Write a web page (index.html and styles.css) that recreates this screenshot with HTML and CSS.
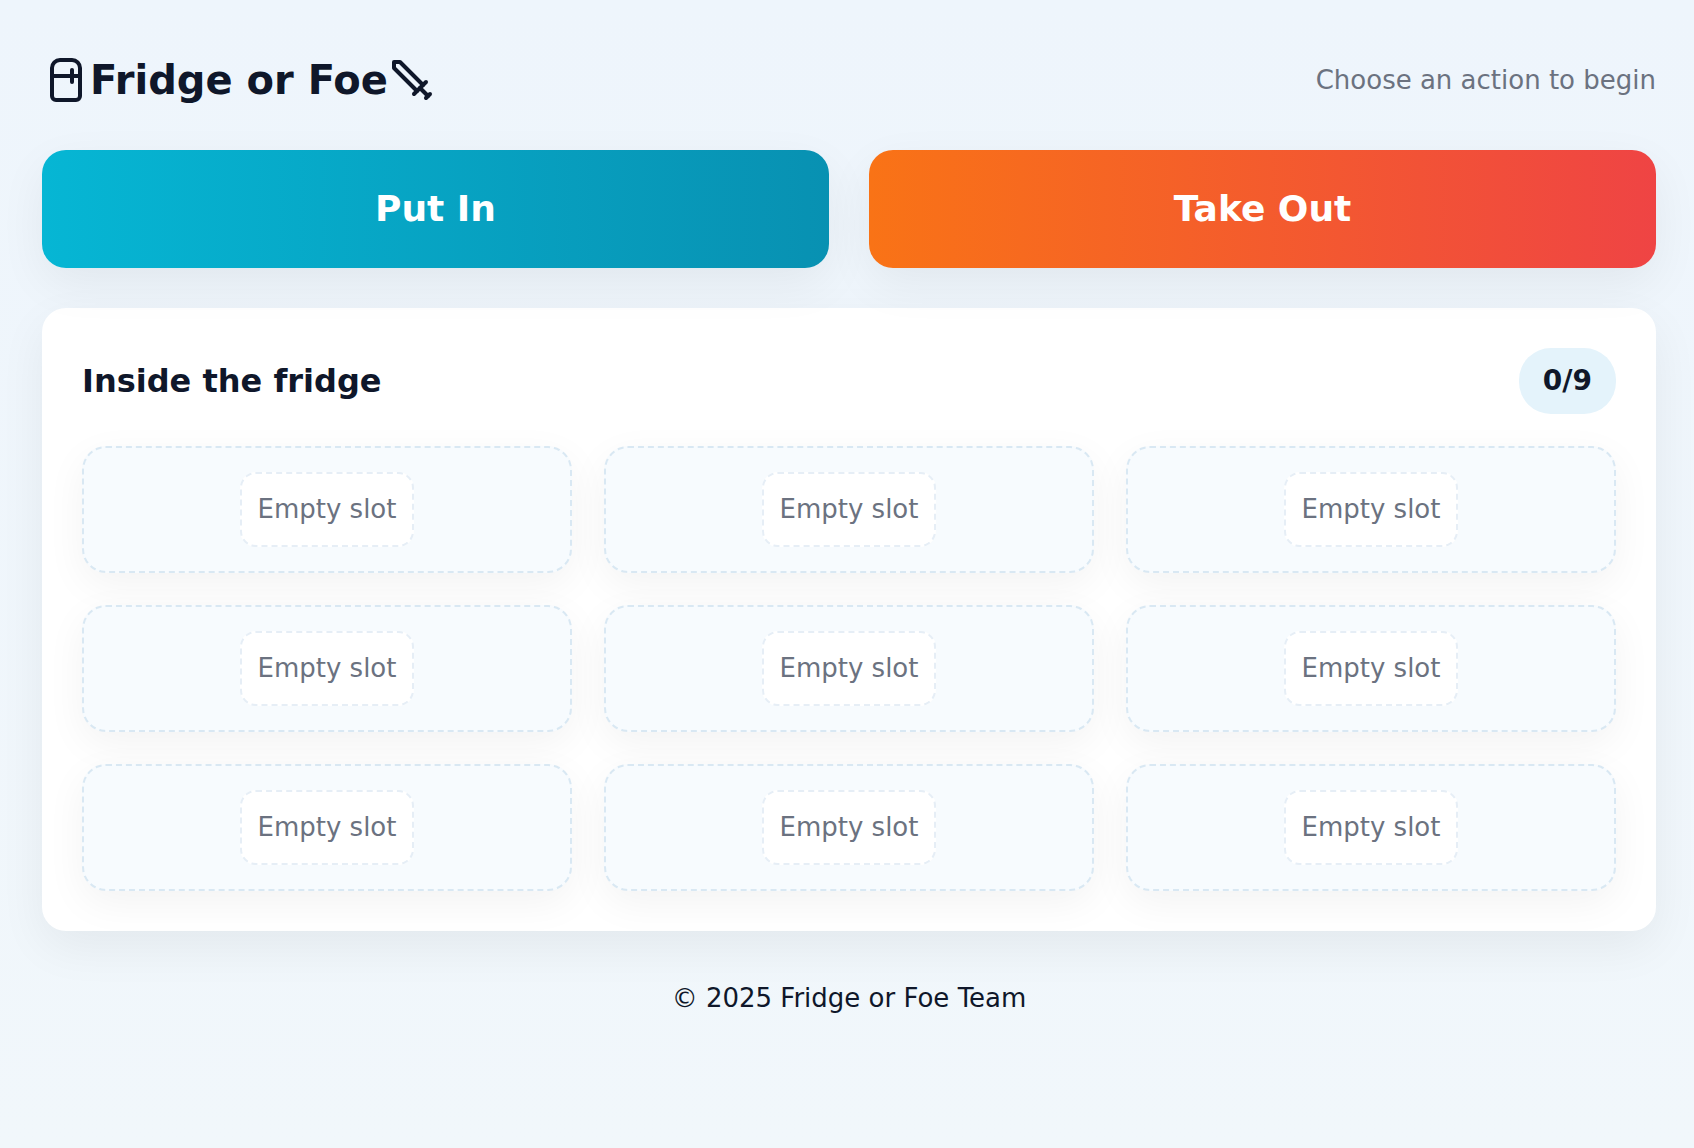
FILE: index.html
```html
<!DOCTYPE html>
<html lang="en">
<head>
<meta charset="utf-8">
<meta name="viewport" content="width=device-width, initial-scale=1">
<title>Fridge or Foe</title>
<link rel="stylesheet" href="styles.css">
</head>
<body>
<div class="app">
  <header class="header">
    <h1 class="brand">
      <svg class="icon" viewBox="0 0 24 24" aria-hidden="true"><path d="M5 6a4 4 0 0 1 4-4h6a4 4 0 0 1 4 4v14a2 2 0 0 1-2 2H7a2 2 0 0 1-2-2V6Z"/><path d="M5 10h14"/><path d="M15 7v6"/></svg>
      <span>Fridge or Foe</span>
      <svg class="icon" viewBox="0 0 24 24" aria-hidden="true"><path d="M14.5 17.5 3 6V3h3l11.5 11.5"/><path d="m13 19 6-6"/><path d="m16 16 4 4"/><path d="m19 21 2-2"/></svg>
    </h1>
    <p class="hint">Choose an action to begin</p>
  </header>
  <main>
    <div class="actions">
      <button class="action put" type="button">Put In</button>
      <button class="action take" type="button">Take Out</button>
    </div>
    <section class="card" aria-labelledby="fridge-title">
      <div class="card-head">
        <h2 class="card-title" id="fridge-title">Inside the fridge</h2>
        <span class="badge">0/9</span>
      </div>
      <ul class="slots">
        <li class="slot"><span class="empty">Empty slot</span></li>
        <li class="slot"><span class="empty">Empty slot</span></li>
        <li class="slot"><span class="empty">Empty slot</span></li>
        <li class="slot"><span class="empty">Empty slot</span></li>
        <li class="slot"><span class="empty">Empty slot</span></li>
        <li class="slot"><span class="empty">Empty slot</span></li>
        <li class="slot"><span class="empty">Empty slot</span></li>
        <li class="slot"><span class="empty">Empty slot</span></li>
        <li class="slot"><span class="empty">Empty slot</span></li>
      </ul>
    </section>
  </main>
  <footer class="footer">© 2025 Fridge or Foe Team</footer>
</div>
</body>
</html>
```
FILE: styles.css
```css
* { box-sizing: border-box; }

body {
  margin: 0;
  min-height: 100vh;
  background: linear-gradient(180deg, #eef5fc, #f1f7fb);
  color: #0f172a;
  font-family: "DejaVu Sans", sans-serif;
  font-size: 26px;
  line-height: 39px;
}

h1, h2, p, ul { margin: 0; padding: 0; }

.app { padding: 50px 38px 50px 42px; }

.header {
  display: flex;
  align-items: center;
  justify-content: space-between;
  margin-bottom: 40px;
}

.brand {
  display: flex;
  align-items: center;
  font-size: 40px;
  line-height: 60px;
}

.icon {
  width: 48px;
  height: 48px;
  fill: none;
  stroke: currentColor;
  stroke-width: 2;
  stroke-linecap: round;
  stroke-linejoin: round;
}

.hint { color: #6b7280; }

.actions {
  display: grid;
  grid-template-columns: repeat(2, 1fr);
  gap: 40px;
  margin-bottom: 40px;
}

.action {
  padding: 32px;
  border: 0;
  border-radius: 24px;
  color: #fff;
  font: bold 36px/54px "DejaVu Sans", sans-serif;
  box-shadow: 0 16px 48px rgba(2, 6, 23, 0.06);
  cursor: pointer;
}

.put { background: linear-gradient(90deg, #06b6d4, #0891b2); }
.take { background: linear-gradient(90deg, #f97316, #ef4444); }

.card {
  padding: 40px;
  border-radius: 24px;
  background: #fff;
  box-shadow: 0 16px 48px rgba(2, 6, 23, 0.06);
}

.card-head {
  display: flex;
  align-items: center;
  justify-content: space-between;
  margin-bottom: 32px;
}

.card-title { font-size: 32px; line-height: 48px; }

.badge {
  padding: 12px 24px;
  border-radius: 32px;
  background: #e4f3fb;
  font-size: 28px;
  font-weight: bold;
  line-height: 42px;
}

.slots {
  display: grid;
  grid-template-columns: repeat(3, 1fr);
  gap: 32px;
  list-style: none;
}

.slot {
  display: flex;
  justify-content: center;
  padding: 24px;
  border: 2px dashed #d9e8f3;
  border-radius: 24px;
  background: #f7fbfe;
  box-shadow: 0 12px 40px rgba(2, 6, 23, 0.05);
}

.empty {
  padding: 16px;
  border: 2px dashed #e6eef6;
  border-radius: 16px;
  background: #fff;
  color: #6b7280;
}

.footer {
  margin-top: 48px;
  text-align: center;
}
```
